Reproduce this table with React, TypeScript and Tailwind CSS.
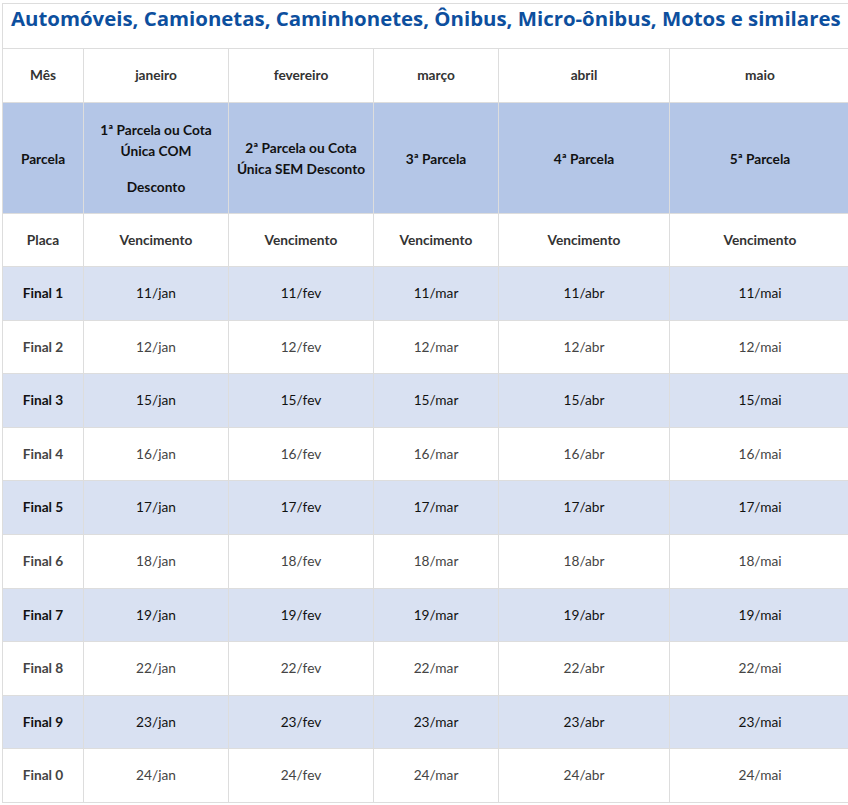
const cols = "grid grid-cols-[81px_145px_145px_125px_171px_181px]";
const font = { fontFamily: "Lato, 'Open Sans', sans-serif" };

const months = ["jan", "fev", "mar", "abr", "mai"];
const days = [11, 12, 15, 16, 17, 18, 19, 22, 23, 24];
const finals = [1, 2, 3, 4, 5, 6, 7, 8, 9, 0];

function Cell({ children, className = "" }: { children: React.ReactNode; className?: string }) {
  return (
    <div className={`flex items-center justify-center text-center border-r border-b border-[#dddddd] px-1 ${className}`}>
      {children}
    </div>
  );
}

export default function App() {
  return (
    <div className="bg-white w-[848px] h-[805px] overflow-hidden pt-[3px] pl-[2px] text-[13.7px] text-[#333333]" style={font}>
      <div className="w-[850px] border-l border-t border-[#dddddd]">
        <div className="h-[45px] border-b border-[#dddddd] pl-[8px] pt-[1px]">
          <h1
            className="text-[20.4px] font-bold text-[#0d4f9e] leading-[26px] whitespace-nowrap"
            style={{ fontFamily: "'Open Sans', sans-serif" }}
          >
            Automóveis, Camionetas, Caminhonetes, Ônibus, Micro-ônibus, Motos e similares
          </h1>
        </div>

        <div className={`${cols} h-[54px] font-bold`}>
          <Cell>Mês</Cell>
          <Cell>janeiro</Cell>
          <Cell>fevereiro</Cell>
          <Cell>março</Cell>
          <Cell>abril</Cell>
          <Cell>maio</Cell>
        </div>

        <div className={`${cols} h-[111px] font-bold bg-[#b4c6e7] text-[#111111] leading-[21px]`}>
          <Cell>Parcela</Cell>
          <Cell>
            <div>
              <p>1ª Parcela ou Cota</p>
              <p className="mb-[15px]">Única COM</p>
              <p>Desconto</p>
            </div>
          </Cell>
          <Cell>
            <div className="whitespace-nowrap">
              <p>2ª Parcela ou Cota</p>
              <p>Única SEM Desconto</p>
            </div>
          </Cell>
          <Cell>3ª Parcela</Cell>
          <Cell>4ª Parcela</Cell>
          <Cell>5ª Parcela</Cell>
        </div>

        <div className={`${cols} h-[53px] font-bold`}>
          <Cell>Placa</Cell>
          {months.map((m) => (
            <Cell key={m}>Vencimento</Cell>
          ))}
        </div>

        {finals.map((f, i) => {
          const striped = i % 2 === 0;
          return (
            <div
              key={f}
              className={`${cols} h-[53.6px] ${striped ? "bg-[#d9e1f2] text-[#111111]" : "text-[#444444]"}`}
            >
              <Cell className="font-bold">Final {f}</Cell>
              {months.map((m) => (
                <Cell key={m}>
                  {days[i]}/{m}
                </Cell>
              ))}
            </div>
          );
        })}
      </div>
    </div>
  );
}
